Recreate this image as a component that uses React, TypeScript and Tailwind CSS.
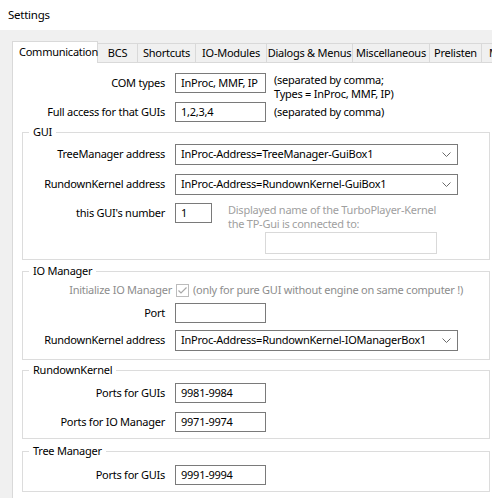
import React from "react";

const font = { fontFamily: '"Noto Sans", "Segoe UI", sans-serif' };

function Chevron() {
  return (
    <svg width="9" height="5" viewBox="0 0 9 5" className="shrink-0">
      <polyline points="0.5,0.5 4.5,4.5 8.5,0.5" fill="none" stroke="#6a6a6a" strokeWidth="1" />
    </svg>
  );
}

function Dropdown({ value }: { value: string }) {
  return (
    <div className="flex h-[21px] w-[283px] items-center justify-between border border-[#7a7a7a] bg-white pl-[5px] pr-[6px]">
      <span>{value}</span>
      <Chevron />
    </div>
  );
}

function Label({ children, className }: { children: React.ReactNode; className: string }) {
  return <div className={"mr-[10px] shrink-0 text-right " + className}>{children}</div>;
}

function Group({ title, className, children }: { title: string; className: string; children: React.ReactNode }) {
  return (
    <div className={"relative ml-[9px] w-[468px] border border-[#dcdcdc] " + className}>
      <span className="absolute -top-[9px] left-[6px] bg-white px-[4px] leading-[16px]">{title}</span>
      {children}
    </div>
  );
}

const tabs = [
  { name: "BCS", w: "w-[40px]" },
  { name: "Shortcuts", w: "w-[58px]" },
  { name: "IO-Modules", w: "w-[71px]" },
  { name: "Dialogs & Menus", w: "w-[86px]" },
  { name: "Miscellaneous", w: "w-[77px]" },
  { name: "Prelisten", w: "w-[52px]" },
  { name: "Multi", w: "w-[40px]" },
];

export default function App() {
  return (
    <div
      className="h-[498px] w-[492px] overflow-hidden whitespace-nowrap bg-[#f0f0f0] text-[11px] tracking-[-0.25px] text-black"
      style={font}
    >
      {/* Titelleiste */}
      <div className="flex h-[30px] items-center bg-white pl-[8px] text-[11.5px]">Settings</div>

      <div className="pl-[12px] pt-[11px]">
        {/* Tabs */}
        <div className="flex h-[21px] items-end">
          <div className="relative z-10 -mb-[1px] flex h-[22px] w-[86px] shrink-0 items-center border border-b-0 border-[#d9d9d9] bg-white pl-[6px]">
            Communication
          </div>
          {tabs.map((t) => (
            <div
              key={t.name}
              className={"flex h-[19px] shrink-0 items-center justify-center overflow-hidden border-r border-t border-[#d9d9d9] bg-[#f0f0f0] " + t.w}
            >
              {t.name}
            </div>
          ))}
        </div>

        {/* Inhalt */}
        <div className="h-[500px] border-l border-t border-[#d9d9d9] bg-white pt-[10px]">
          <div className="flex items-start">
            <Label className="flex h-[20px] w-[152px] items-center justify-end">COM types</Label>
            <div className="flex h-[20px] w-[91px] items-center border border-[#7a7a7a] px-[5px]">InProc, MMF, IP</div>
            <div className="ml-[8px] leading-[14px]">
              <div>(separated by comma;</div>
              <div>Types = InProc, MMF, IP)</div>
            </div>
          </div>
          <div className="mt-[1px] flex items-center">
            <Label className="w-[152px]">Full access for that GUIs</Label>
            <div className="flex h-[20px] w-[91px] items-center border border-[#7a7a7a] px-[5px]">1,2,3,4</div>
            <div className="ml-[8px]">(separated by comma)</div>
          </div>

          <Group title="GUI" className="mt-[10px] pb-[5px] pt-[11px]">
            <div className="flex items-center">
              <Label className="w-[142px]">TreeManager address</Label>
              <Dropdown value="InProc-Address=TreeManager-GuiBox1" />
            </div>
            <div className="mt-[9px] flex items-center">
              <Label className="w-[142px]">RundownKernel address</Label>
              <Dropdown value="InProc-Address=RundownKernel-GuiBox1" />
            </div>
            <div className="mt-[8px] flex items-start">
              <Label className="flex h-[20px] w-[142px] items-center justify-end">this GUI's number</Label>
              <div className="flex h-[20px] w-[37px] items-center border border-[#7a7a7a] px-[5px]">1</div>
              <div className="ml-[16px] text-[#a0a0a0]">
                <div className="leading-[14px]">
                  <div>Displayed name of the TurboPlayer-Kernel</div>
                  <div>the TP-Gui is connected to:</div>
                </div>
                <div className="ml-[37px] mt-[1px] h-[22px] w-[172px] border border-[#d9d9d9]" />
              </div>
            </div>
          </Group>

          <Group title="IO Manager" className="mt-[11px] pb-[8px] pt-[8px]">
            <div className="flex h-[20px] items-center text-[#8d8d8d]">
              <div className="w-[149px] shrink-0 text-right">Initialize IO Manager</div>
              <svg width="13" height="13" viewBox="0 0 13 13" className="ml-[4px] shrink-0">
                <rect x="0.5" y="0.5" width="12" height="12" fill="white" stroke="#bcbcbc" />
                <polyline points="2.5,6.5 5,9 10.5,3.5" fill="none" stroke="#a8a8a8" strokeWidth="1.2" />
              </svg>
              <span className="ml-[4px]">(only for pure GUI without engine on same computer !)</span>
            </div>
            <div className="mt-[3px] flex items-center">
              <Label className="w-[142px]">Port</Label>
              <div className="h-[20px] w-[91px] border border-[#7a7a7a]" />
            </div>
            <div className="mt-[7px] flex items-center">
              <Label className="w-[142px]">RundownKernel address</Label>
              <Dropdown value="InProc-Address=RundownKernel-IOManagerBox1" />
            </div>
          </Group>

          <Group title="RundownKernel" className="mt-[10px] pb-[6px] pt-[12px]">
            <div className="flex items-center">
              <Label className="w-[142px]">Ports for GUIs</Label>
              <div className="flex h-[20px] w-[91px] items-center border border-[#7a7a7a] px-[5px]">9981-9984</div>
            </div>
            <div className="mt-[9px] flex items-center">
              <Label className="w-[142px]">Ports for IO Manager</Label>
              <div className="flex h-[20px] w-[91px] items-center border border-[#7a7a7a] px-[5px]">9971-9974</div>
            </div>
          </Group>

          <Group title="Tree Manager" className="mt-[12px] pb-[6px] pt-[13px]">
            <div className="flex items-center">
              <Label className="w-[142px]">Ports for GUIs</Label>
              <div className="flex h-[20px] w-[91px] items-center border border-[#7a7a7a] px-[5px]">9991-9994</div>
            </div>
          </Group>
        </div>
      </div>
    </div>
  );
}
